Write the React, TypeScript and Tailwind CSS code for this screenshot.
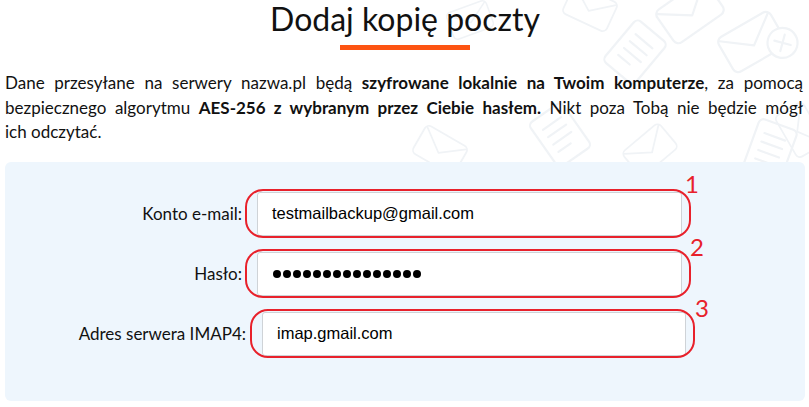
import React from 'react';

const lato = { fontFamily: 'Lato, "Noto Sans", sans-serif' };
const arial = { fontFamily: '"Liberation Sans", Arial, sans-serif' };

function Envelope({ x, y, r, s = 1, cross = false }: { x: number; y: number; r: number; s?: number; cross?: boolean }) {
  return (
    <g transform={`translate(${x} ${y}) rotate(${r}) scale(${s})`} fill="none" stroke="#f0f3f6" strokeWidth="2.2" strokeLinejoin="round" strokeLinecap="round">
      <rect x="-30" y="-20" width="60" height="40" rx="6" />
      <path d="M-28 -17 L0 4 L28 -17" />
      {cross && (
        <>
          <circle cx="26" cy="16" r="15" fill="#fff" />
          <path d="M20 10 L32 22 M32 10 L20 22" />
        </>
      )}
    </g>
  );
}

function Doc({ x, y, r }: { x: number; y: number; r: number }) {
  return (
    <g transform={`translate(${x} ${y}) rotate(${r})`} fill="none" stroke="#f0f3f6" strokeWidth="2.2" strokeLinecap="round">
      <rect x="-20" y="-27" width="40" height="54" rx="5" />
      <path d="M-11 -14 H11 M-11 -5 H11 M-11 4 H11 M-11 13 H4" />
    </g>
  );
}

function Field({ label, labelW, ml, inputW, num, numPos, children }: {
  label: string; labelW: string; ml: string; inputW: string; num: string; numPos: string; children: React.ReactNode;
}) {
  return (
    <div className="flex items-center">
      <div className={`${labelW} shrink-0 text-right text-[17px] text-[#111]`} style={lato}>{label}</div>
      <div className={`relative ${ml} ${inputW} h-[44px]`}>
        <div className="flex h-full items-center rounded-[3px] border border-[#cfd3d7] bg-white pl-[14px]">{children}</div>
        <div className="pointer-events-none absolute -left-[12px] -right-[9px] -top-[3px] -bottom-[2px] rounded-[18px] border-2 border-[#e8212b]" />
        <span className={`absolute ${numPos} text-[24px] leading-[24px] text-[#e8212b]`} style={lato}>{num}</span>
      </div>
    </div>
  );
}

export default function App() {
  return (
    <div className="relative h-[407px] w-[809px] overflow-hidden bg-white text-[#111]" style={lato}>
      <svg className="absolute inset-0" width="809" height="407">
        <Envelope x={690} y={12} r={-35} />
        <Envelope x={590} y={8} r={25} s={0.8} />
        <Doc x={635} y={52} r={40} />
        <Envelope x={752} y={42} r={-30} cross />
        <Envelope x={800} y={130} r={60} s={0.8} />
        <Doc x={560} y={135} r={-35} />
        <Envelope x={440} y={150} r={30} s={0.8} />
        <Envelope x={650} y={150} r={-40} s={0.8} />
        <Doc x={770} y={150} r={20} />
        <Envelope x={470} y={20} r={-20} s={0.7} />
      </svg>

      <div className="relative pl-[5px] pr-[4px]">
        <h1 className="text-center text-[32px] leading-[38px] font-normal text-[#111]">Dodaj kopię poczty</h1>
        <div className="mx-auto mt-[7px] h-[5px] w-[130px] bg-[#fd5412]" />

        <div className="mt-[21px] mr-[2px] text-[17px] leading-[24.5px] text-[#111]">
          <p className="text-justify [text-align-last:justify]">
            Dane przesyłane na serwery nazwa.pl będą <b>szyfrowane lokalnie na Twoim komputerze</b>, za pomocą
          </p>
          <p className="text-justify [text-align-last:justify]">
            bezpiecznego algorytmu <b>AES-256 z wybranym przez Ciebie hasłem.</b> Nikt poza Tobą nie będzie mógł
          </p>
          <p>ich odczytać.</p>
        </div>

        <div className="mt-[17px] flex h-[239px] flex-col gap-[16px] rounded-[6px] bg-[#eef6fd] pt-[30px]">
          <Field label="Konto e-mail:" labelW="w-[237px]" ml="ml-[15px]" inputW="w-[425px]" num="1" numPos="left-[calc(100%+3px)] -top-[20px]">
            <span className="text-[16.5px] text-black" style={arial}>testmailbackup@gmail.com</span>
          </Field>
          <Field label="Hasło:" labelW="w-[237px]" ml="ml-[15px]" inputW="w-[425px]" num="2" numPos="left-[calc(100%+8px)] -top-[17px]">
            <div className="flex gap-[2px] pl-[1px]">
              {Array.from({ length: 15 }).map((_, i) => (
                <span key={i} className="h-[8px] w-[8px] rounded-full bg-black" />
              ))}
            </div>
          </Field>
          <Field label="Adres serwera IMAP4:" labelW="w-[241px]" ml="ml-[16px]" inputW="w-[424px]" num="3" numPos="left-[calc(100%+9px)] -top-[16px]">
            <span className="text-[16.5px] text-black" style={arial}>imap.gmail.com</span>
          </Field>
        </div>
      </div>
    </div>
  );
}
